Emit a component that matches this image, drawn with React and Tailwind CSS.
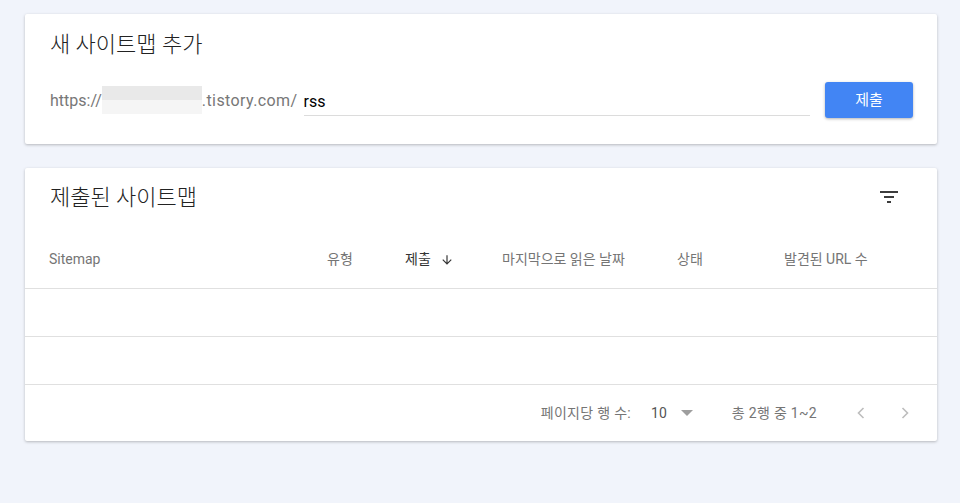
const font = { fontFamily: 'Roboto, "Noto Sans CJK KR", sans-serif' };

const columns = [
  ["Sitemap", "w-[278px]"],
  ["유형", "w-[78px]"],
  ["제출", "w-[97px]"],
  ["마지막으로 읽은 날짜", "w-[175px]"],
  ["상태", "w-[107px]"],
  ["발견된 URL 수", "flex-1"],
];

function FilterIcon() {
  return (
    <svg width="24" height="24" viewBox="0 0 24 24" fill="#3c3c3c">
      <path d="M3 6h18v2H3zM7 11h10v2H7zM10 16h4v2h-4z" />
    </svg>
  );
}

function Chevron({ dir }) {
  return (
    <svg width="24" height="24" viewBox="0 0 24 24" fill="none" stroke="#bdbdbd" strokeWidth="1.6">
      {dir === "left" ? <path d="M14.5 7l-5 5 5 5" /> : <path d="M9.5 7l5 5-5 5" />}
    </svg>
  );
}

export default function App() {
  return (
    <div className="min-h-[503px] bg-[#f1f4fb] pl-[25px] pr-[23px] pt-[14px] pb-[62px] text-[#333]" style={font}>
      <section className="h-[130px] rounded-[2px] bg-white shadow-[0_1px_3px_rgba(0,0,0,0.25)]">
        <h2 className="pt-[18px] pl-[25px] text-[22px] font-light leading-[26px] text-[#222]">새 사이트맵 추가</h2>
        <div className="mt-[24px] flex items-center pl-[25px] pr-[24px]">
          <span className="pt-[2px] text-[16px] text-[#777]">https://</span>
          <span className="flex h-[28px] w-[100px] flex-col">
            <span className="h-[14px] bg-[#e9e9e9]" />
            <span className="h-[14px] bg-[#f5f5f5]" />
          </span>
          <span className="pt-[2px] text-[16px] tracking-[0.4px] text-[#777]">.tistory.com/</span>
          <div className="ml-[6px] flex h-[31px] w-[506px] items-center border-b border-[#dcdcdc] pt-[4px] text-[16px] text-black">
            rss
          </div>
          <button className="ml-auto h-[36px] w-[88px] rounded-[3px] bg-[#4285f4] text-[15px] text-white shadow-[0_1px_3px_rgba(0,0,0,0.3)]">
            제출
          </button>
        </div>
      </section>

      <section className="mt-[24px] rounded-[2px] bg-white shadow-[0_1px_3px_rgba(0,0,0,0.25)]">
        <div className="flex h-[60px] items-start justify-between pt-[17px] pl-[25px] pr-[36px]">
          <h2 className="text-[22px] font-light leading-[26px] text-[#222]">제출된 사이트맵</h2>
          <FilterIcon />
        </div>
        <div className="flex h-[61px] items-center border-b border-[#e0e0e0] pt-[3px] pl-[24px] text-[14px] text-[#757575]">
          {columns.map(([label, w]) => (
            <div key={label} className={`${w} flex items-center`}>
              {label === "제출" ? (
                <span className="flex items-center gap-[9px] text-[#333]">
                  제출
                  <svg width="14" height="14" viewBox="0 0 24 24" fill="#333">
                    <path d="M20 12l-1.41-1.41L13 16.17V4h-2v12.17l-5.58-5.59L4 12l8 8 8-8z" />
                  </svg>
                </span>
              ) : (
                label
              )}
            </div>
          ))}
        </div>
        <div className="h-[48px] border-b border-[#e0e0e0]" />
        <div className="h-[48px] border-b border-[#e0e0e0]" />
        <div className="flex h-[56px] items-center justify-end pr-[20px] text-[14px] text-[#757575]">
          <span className="tracking-[0.3px]">페이지당 행 수:</span>
          <span className="ml-[20px] text-[#555]">10</span>
          <svg className="ml-[14px]" width="12" height="8" viewBox="0 0 12 8" fill="#9e9e9e">
            <path d="M0 1h12L6 7z" />
          </svg>
          <span className="ml-[39px] tracking-[0.3px]">총 2행 중 1~2</span>
          <div className="ml-[32px] flex gap-[20px]">
            <Chevron dir="left" />
            <Chevron dir="right" />
          </div>
        </div>
      </section>
    </div>
  );
}
